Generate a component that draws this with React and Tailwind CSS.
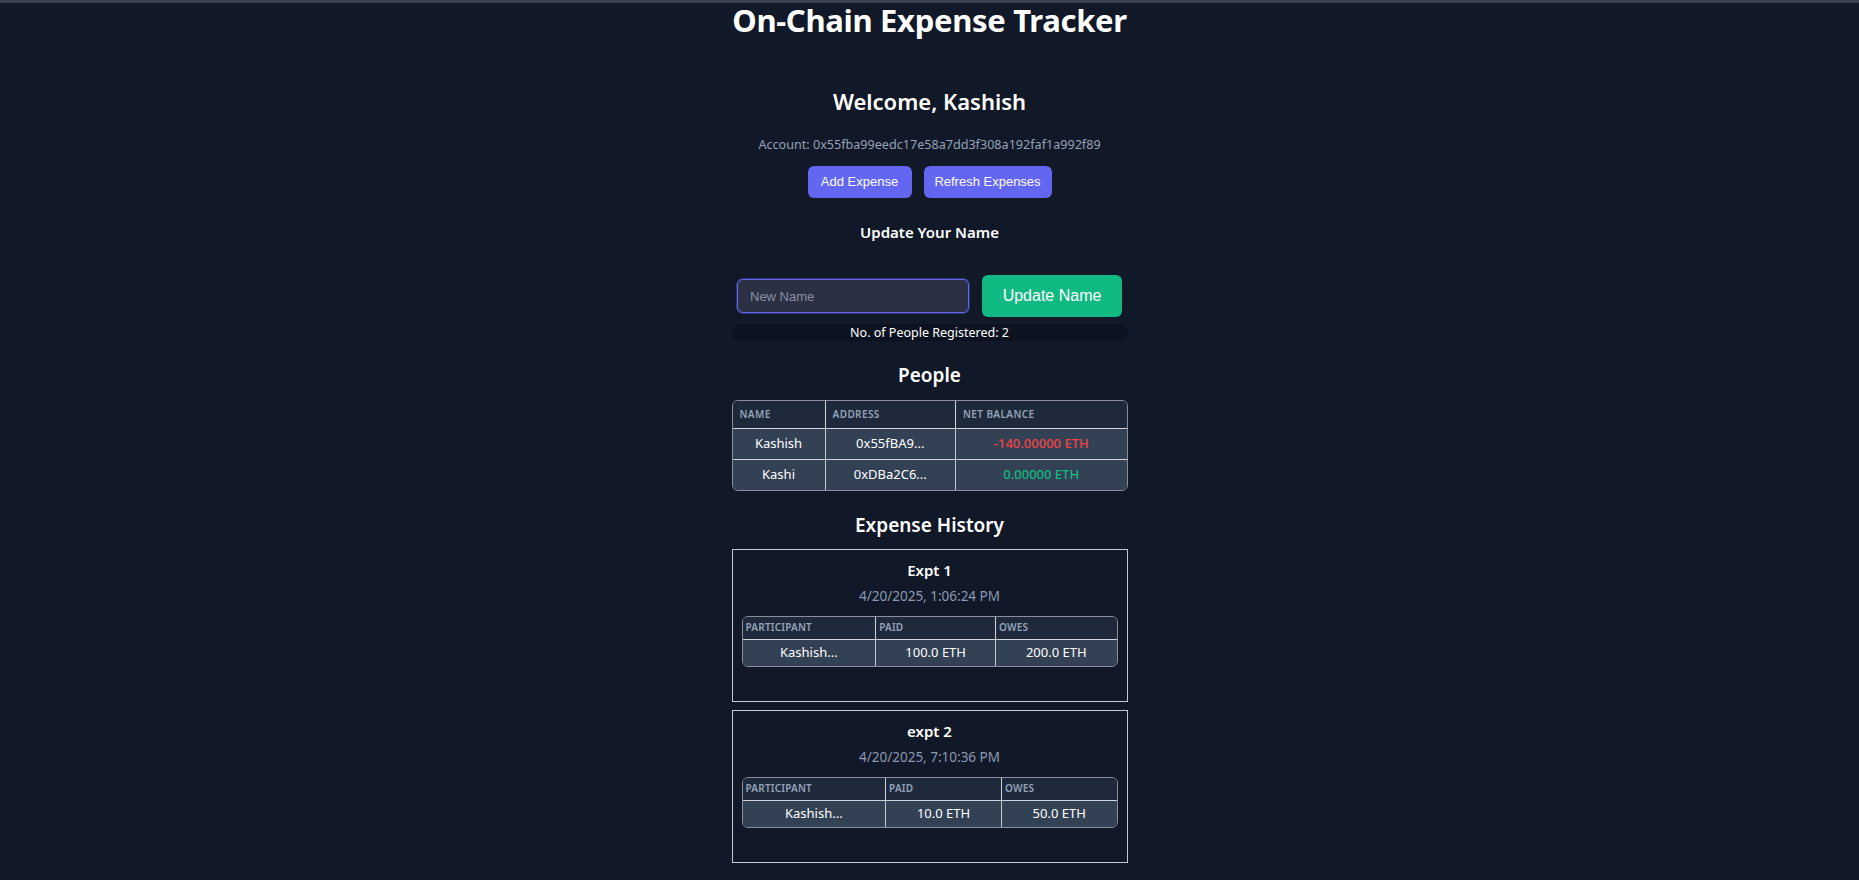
import React from "react";

const people = [
  { name: "Kashish", addr: "0x55fBA9...", bal: "-140.00000 ETH", neg: true },
  { name: "Kashi", addr: "0xDBa2C6...", bal: "0.00000 ETH", neg: false },
];

const expenses = [
  {
    title: "Expt 1",
    date: "4/20/2025, 1:06:24 PM",
    cols: ["w-[134px]", "w-[121px]", "w-[122px]"],
    rows: [["Kashish...", "100.0 ETH", "200.0 ETH"]],
  },
  {
    title: "expt 2",
    date: "4/20/2025, 7:10:36 PM",
    cols: ["w-[144px]", "w-[117px]", "w-[116px]"],
    rows: [["Kashish...", "10.0 ETH", "50.0 ETH"]],
  },
];

function ExpenseCard({ e, first }) {
  return (
    <div className={`${first ? "mt-[10px]" : "mt-[8px]"} border border-[#c4c8d0] px-[9px] pt-[8px] pb-[34px]`}>
      <h3 className="text-center text-[15px] leading-[24px] font-semibold text-white">{e.title}</h3>
      <p className="mt-[4px] text-center text-[13.5px] leading-[20px] text-[#8b9ab4]">{e.date}</p>
      <div className="mt-[10px] rounded-md border border-[#8a8f99] overflow-hidden">
        <table className="w-full border-collapse">
          <thead>
            <tr className="bg-[#1e293b] h-[22px]">
              {["PARTICIPANT", "PAID", "OWES"].map((h, i) => (
                <th
                  key={h}
                  className={`${e.cols[i]} ${i > 0 ? "border-l border-[#c4c8d0]" : ""} border-b border-[#d1d5db] px-[3px] text-left text-[10px] font-semibold tracking-[0.02em] text-[#94a3b8]`}
                >
                  {h}
                </th>
              ))}
            </tr>
          </thead>
          <tbody>
            {e.rows.map((r, ri) => (
              <tr key={ri} className="bg-[#334155] h-[27px]">
                {r.map((c, i) => (
                  <td
                    key={i}
                    className={`${i > 0 ? "border-l border-[#c4c8d0]" : ""} text-center text-[13px] text-white`}
                  >
                    {c}
                  </td>
                ))}
              </tr>
            ))}
          </tbody>
        </table>
      </div>
    </div>
  );
}

export default function App() {
  return (
    <div
      className="min-h-screen bg-[#111827] text-white"
      style={{ fontFamily: '"Noto Sans", "Open Sans", sans-serif' }}
    >
      <div className="h-[3px] bg-[#3a4150]" />
      <div className="mx-auto w-[396px] pb-10">
        <h1 className="whitespace-nowrap text-center text-[31px] leading-[34px] font-bold text-white tracking-[-0.01em]">
          On-Chain Expense Tracker
        </h1>

        <h2 className="mt-[48px] text-center text-[22px] leading-[32px] font-semibold text-white">
          Welcome, Kashish
        </h2>
        <p className="mt-[18px] whitespace-nowrap text-center text-[12.6px] leading-[20px] text-[#94a3b8]">
          Account: 0x55fba99eedc17e58a7dd3f308a192faf1a992f89
        </p>

        <div
          className="mt-[11px] flex justify-center gap-[12px]"
          style={{ fontFamily: '"Liberation Sans", Arial, sans-serif' }}
        >
          <button className="h-[32px] w-[104px] rounded-md bg-[#6366f1] text-[13px] text-white">
            Add Expense
          </button>
          <button className="h-[32px] w-[128px] rounded-md bg-[#6366f1] text-[13px] text-white">
            Refresh Expenses
          </button>
        </div>

        <h3 className="mt-[22px] text-center text-[15px] leading-[24px] font-semibold text-white">
          Update Your Name
        </h3>

        <div
          className="mt-[31px] flex items-center justify-center gap-[13px]"
          style={{ fontFamily: '"Liberation Sans", Arial, sans-serif' }}
        >
          <input
            placeholder="New Name"
            className="h-[34px] w-[232px] rounded-md border border-[#6366f1] bg-[#2b3045] px-[12px] text-[13px] text-white placeholder:text-[#8a90a2] shadow-[0_0_0_1px_rgba(99,102,241,0.35)] outline-none"
          />
          <button className="h-[42px] w-[140px] rounded-md bg-[#10b981] text-[16px] text-white">
            Update Name
          </button>
        </div>

        <div className="mt-[7px] h-[17px] rounded-full bg-[#0c1220] text-center text-[12.5px] leading-[17px] text-white">
          No. of People Registered: 2
        </div>

        <h2 className="mt-[20px] text-center text-[19px] leading-[28px] font-semibold text-white">
          People
        </h2>

        <div className="mt-[11px] rounded-md border border-[#8a8f99] overflow-hidden">
          <table className="w-full border-collapse">
            <thead>
              <tr className="bg-[#1e293b] h-[27px]">
                {["NAME", "ADDRESS", "NET BALANCE"].map((h, i) => (
                  <th
                    key={h}
                    className={`${["w-[93px]", "w-[131px]", "w-[172px]"][i]} ${i > 0 ? "border-l border-[#c4c8d0]" : ""} border-b border-[#d1d5db] px-[7px] text-left text-[10px] font-semibold tracking-[0.04em] text-[#94a3b8]`}
                  >
                    {h}
                  </th>
                ))}
              </tr>
            </thead>
            <tbody>
              {people.map((p, ri) => (
                <tr key={p.name} className={`bg-[#334155] h-[31px] ${ri > 0 ? "border-t border-[#d1d5db]" : ""}`}>
                  <td className="text-center text-[13px] text-white">{p.name}</td>
                  <td className="border-l border-[#c4c8d0] text-center text-[13px] text-white">{p.addr}</td>
                  <td
                    className={`border-l border-[#c4c8d0] text-center text-[13px] font-medium ${p.neg ? "text-[#ef4444]" : "text-[#10b981]"}`}
                  >
                    {p.bal}
                  </td>
                </tr>
              ))}
            </tbody>
          </table>
        </div>

        <h2 className="mt-[20px] text-center text-[19px] leading-[28px] font-semibold text-white">
          Expense History
        </h2>

        {expenses.map((e, i) => (
          <ExpenseCard key={e.title} e={e} first={i === 0} />
        ))}
      </div>
    </div>
  );
}
